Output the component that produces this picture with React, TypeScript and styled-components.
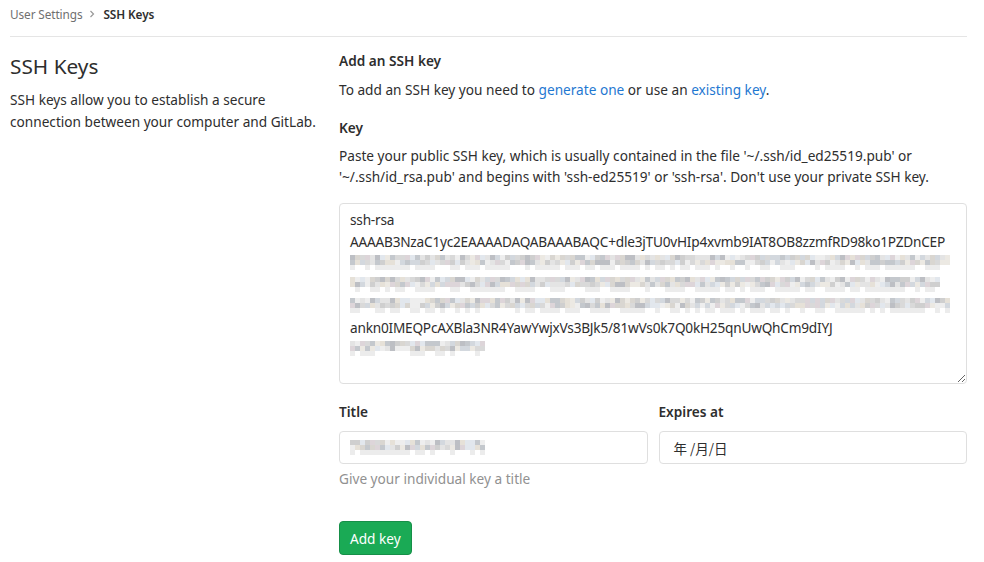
import React from "react";
import styled, { createGlobalStyle } from "styled-components";

const Global = createGlobalStyle`
  html, body { margin: 0; padding: 0; background: #fff; }
  body {
    font-family: "Noto Sans", "Open Sans", "Liberation Sans", "Noto Sans CJK SC", sans-serif;
    font-size: 13.65px;
    color: #2e2e2e;
  }
  * { box-sizing: border-box; }
`;

const Page = styled.div`
  margin: 0 17px 0 10px;
`;

const Breadcrumbs = styled.nav`
  height: 37px;
  display: flex;
  align-items: center;
  padding-bottom: 9px;
  border-bottom: 1px solid #e5e5e5;
  font-size: 11.8px;
  letter-spacing: -0.1px;
`;

const Crumb = styled.span<{ $current?: boolean }>`
  color: ${(p) => (p.$current ? "#2e2e2e" : "#707070")};
  font-weight: ${(p) => (p.$current ? 600 : 400)};
`;

const Chevron = styled.svg`
  margin: 0 7px 0 6px;
  width: 8px;
  height: 8px;
`;

const Row = styled.div`
  display: grid;
  grid-template-columns: 313px 628px;
  column-gap: 16px;
  margin-top: 14px;
`;

const Side = styled.div``;

const SideTitle = styled.h2`
  margin: 2px 0 0;
  font-size: 20.8px;
  font-weight: 400;
  line-height: 27px;
`;

const SideText = styled.p`
  margin: 9px 0 0;
  line-height: 22px;
`;

const Main = styled.div``;

const Heading = styled.h4`
  margin: 0;
  font-size: inherit;
  font-weight: 600;
  line-height: 20px;
`;

const Text = styled.p<{ $mt?: number }>`
  margin: ${(p) => p.$mt ?? 9}px 0 0;
  line-height: 20px;
`;

const Link = styled.a`
  color: #1f78d1;
  text-decoration: none;
`;

const Label = styled.label<{ $mt?: number }>`
  display: block;
  margin-top: ${(p) => p.$mt ?? 18}px;
  font-weight: 600;
  line-height: 20px;
`;

const Hint = styled.p`
  margin: 7px 0 0;
  line-height: 21px;
`;

const KeyBox = styled.div`
  margin-top: 16px;
  height: 181px;
  border: 1px solid #dfdfdf;
  border-radius: 4px;
  padding: 5px 10px;
  line-height: 21.5px;
  resize: vertical;
  overflow: auto;
`;

const KeyLine = styled.div`
  white-space: nowrap;
  height: 21.5px;
  display: flex;
  align-items: center;
  letter-spacing: -0.22px;
`;

const FieldGrid = styled.div`
  display: grid;
  grid-template-columns: 1fr 1fr;
  column-gap: 11px;
`;

const Field = styled.div``;

const Input = styled.div`
  margin-top: 9px;
  height: 33px;
  border: 1px solid #dfdfdf;
  border-radius: 4px;
  padding: 0 10px;
  display: flex;
  align-items: center;
`;

const DateText = styled.span`
  padding-left: 4px;
  font-family: "Noto Sans CJK SC", "Noto Sans", sans-serif;
  font-size: 13.5px;
  color: #2e2e2e;
`;

const Help = styled.p`
  margin: 5px 0 0;
  color: #919191;
  line-height: 20px;
`;

const Button = styled.button`
  margin-top: 32px;
  height: 34px;
  padding: 0 10px;
  background: #1aaa55;
  border: 1px solid #168f48;
  border-radius: 4px;
  color: #fff;
  font-family: inherit;
  font-size: 13.65px;
  cursor: pointer;
`;

function rnd(seed: number) {
  let s = seed;
  return () => {
    s = (s * 9301 + 49297) % 233280;
    return s / 233280;
  };
}

const tints = [
  "#cfcfcf", "#d9d6d1", "#d3d8de", "#ddd5d9", "#e4e4e4", "#ece9e3",
  "#e2e7ed", "#c4c8cd", "#eeeeee", "#d9d9d9", "#bdbfc4", "#e6e1d8",
];

function Blur({ width, seed }: { width: number; seed: number }) {
  const r = rnd(seed);
  const cell = 5;
  const cols = Math.floor(width / cell);
  const rects: React.ReactNode[] = [];
  for (let row = 0; row < 3; row++) {
    for (let c = 0; c < cols; c++) {
      const v = r();
      const color = tints[Math.floor(r() * tints.length)];
      if (row === 2 && v < 0.4) continue;
      rects.push(
        <rect key={`${row}-${c}`} x={c * cell} y={row * 5} width={cell} height={5} fill={row === 2 ? "#ececec" : color} />
      );
    }
  }
  return (
    <svg width={cols * cell} height={15} aria-hidden="true">
      {rects}
    </svg>
  );
}

export default function App() {
  return (
    <>
      <Global />
      <Page>
        <Breadcrumbs>
          <Crumb>User Settings</Crumb>
          <Chevron viewBox="0 0 8 8">
            <path d="M2.5 1 L5.5 4 L2.5 7" fill="none" stroke="#999" strokeWidth="1.2" />
          </Chevron>
          <Crumb $current>SSH Keys</Crumb>
        </Breadcrumbs>
        <Row>
          <Side>
            <SideTitle>SSH Keys</SideTitle>
            <SideText>SSH keys allow you to establish a secure connection between your computer and GitLab.</SideText>
          </Side>
          <Main>
            <Heading>Add an SSH key</Heading>
            <Text>
              To add an SSH key you need to <Link href="#">generate one</Link> or use an{" "}
              <Link href="#">existing key</Link>.
            </Text>
            <Label>Key</Label>
            <Hint>
              Paste your public SSH key, which is usually contained in the file '~/.ssh/id_ed25519.pub' or
              '~/.ssh/id_rsa.pub' and begins with 'ssh-ed25519' or 'ssh-rsa'. Don't use your private SSH key.
            </Hint>
            <KeyBox>
              <KeyLine>ssh-rsa</KeyLine>
              <KeyLine>AAAAB3NzaC1yc2EAAAADAQABAAABAQC+dle3jTU0vHIp4xvmb9IAT8OB8zzmfRD98ko1PZDnCEP</KeyLine>
              <KeyLine><Blur width={600} seed={11} /></KeyLine>
              <KeyLine><Blur width={592} seed={23} /></KeyLine>
              <KeyLine><Blur width={604} seed={37} /></KeyLine>
              <KeyLine>ankn0IMEQPcAXBla3NR4YawYwjxVs3BJk5/81wVs0k7Q0kH25qnUwQhCm9dIYJ</KeyLine>
              <KeyLine><Blur width={136} seed={51} /></KeyLine>
            </KeyBox>
            <FieldGrid>
              <Field>
                <Label>Title</Label>
                <Input><Blur width={136} seed={71} /></Input>
                <Help>Give your individual key a title</Help>
              </Field>
              <Field>
                <Label>Expires at</Label>
                <Input><DateText>年 /月/日</DateText></Input>
              </Field>
            </FieldGrid>
            <Button>Add key</Button>
          </Main>
        </Row>
      </Page>
    </>
  );
}
